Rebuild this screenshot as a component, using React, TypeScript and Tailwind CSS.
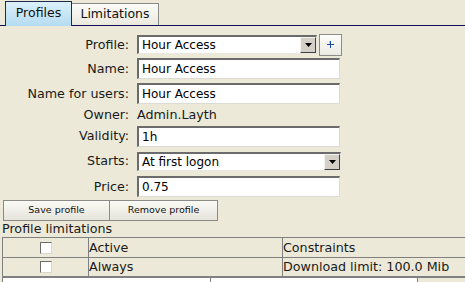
import React from "react";

const font = { fontFamily: '"DejaVu Sans", Verdana, sans-serif' };

function Arrow() {
  return (
    <div className="flex h-full w-[16px] items-center justify-center border-t border-l border-b border-r border-t-[#f4f3ee] border-l-[#f4f3ee] border-b-[#404040] border-r-[#404040] bg-[#d4d0c8]">
      <svg width="7" height="4" viewBox="0 0 7 4">
        <polygon points="0,0 7,0 3.5,4" fill="#000" />
      </svg>
    </div>
  );
}

function Select({ value, w }: { value: string; w: string }) {
  return (
    <div className={`flex h-[19px] ${w} items-stretch border-t-2 border-l-2 border-b border-r border-t-[#6b6b6b] border-l-[#6b6b6b] border-b-[#e8e7e0] border-r-[#e8e7e0] bg-white`}>
      <div className="flex-1 pl-[3px] text-[12px] leading-[16px] text-black">{value}</div>
      <Arrow />
    </div>
  );
}

function Input({ value }: { value: string }) {
  return (
    <div className="h-[21px] w-[203px] border-t-2 border-l-2 border-b border-r border-t-[#6b6b6b] border-l-[#6b6b6b] border-b-[#dcdbd4] border-r-[#dcdbd4] bg-white pl-[3px] text-[12px] leading-[18px] text-black">
      {value}
    </div>
  );
}

function Row({ label, h, children }: { label: string; h: string; children: React.ReactNode }) {
  return (
    <div className={`flex ${h} items-center`}>
      <div className="w-[130px] pr-[1px] text-right text-[12.7px] text-[#1a1a1a]">{label}</div>
      <div className="ml-[7px] flex items-center">{children}</div>
    </div>
  );
}

function Check() {
  return (
    <div className="mx-auto h-[12px] w-[12px] border-t border-l border-b border-r border-t-[#6b6b6b] border-l-[#6b6b6b] border-b-[#d8d7d0] border-r-[#d8d7d0] bg-white" />
  );
}

export default function App() {
  return (
    <div style={font} className="h-[282px] w-[465px] overflow-hidden bg-[#ECE9D8] text-black">
      {/* Tabs */}
      <div className="flex h-[26px] items-end border-b border-[#10105a] pl-[5px]">
        <div className="relative z-10 mb-[-1px] flex h-[25px] w-[67px] items-center justify-center border border-b-0 border-[#1c2c4c] bg-gradient-to-b from-[#dcf0fb] to-[#b5dcf1] pb-[1px] text-[12.5px] text-[#101010]">
          Profiles
        </div>
        <div className="flex h-[22px] w-[87px] items-center justify-center border border-b-0 border-l-0 border-[#8a8a86] bg-gradient-to-b from-[#fbfbf8] to-[#ebe9df] text-[12.5px] text-[#101010]">
          Limitations
        </div>
      </div>

      {/* Form */}
      <div className="pt-[7px]">
        <Row label="Profile:" h="h-[23px]">
          <Select value="Hour Access" w="w-[180px]" />
          <div className="ml-[2px] flex h-[22px] w-[23px] items-center justify-center border border-[#8c8c88] bg-gradient-to-b from-[#fdfdfb] to-[#ebeae2]">
            <svg width="7" height="7" viewBox="0 0 7 7">
              <rect x="3" y="0" width="1" height="7" fill="#1a4aa0" />
              <rect x="0" y="3" width="7" height="1" fill="#1a4aa0" />
              <rect x="2" y="0" width="1" height="3" fill="#e8a040" opacity="0.6" />
            </svg>
          </div>
        </Row>
        <Row label="Name:" h="h-[25px]">
          <Input value="Hour Access" />
        </Row>
        <Row label="Name for users:" h="h-[25px]">
          <Input value="Hour Access" />
        </Row>
        <Row label="Owner:" h="h-[18px]">
          <span className="text-[12.7px] text-[#1a1a1a]">Admin.Layth</span>
        </Row>
        <Row label="Validity:" h="h-[24px]">
          <Input value="1h" />
        </Row>
        <Row label="Starts:" h="h-[26px]">
          <Select value="At first logon" w="w-[204px]" />
        </Row>
        <Row label="Price:" h="h-[25px]">
          <Input value="0.75" />
        </Row>
      </div>

      {/* Buttons */}
      <div className="mt-[1px] flex pl-[3px]">
        <div className="flex h-[21px] w-[107px] items-center justify-center border border-[#8a8a86] bg-gradient-to-b from-[#fafaf6] to-[#e6e4da] text-[9.5px] text-[#111]">
          Save profile
        </div>
        <div className="flex h-[21px] w-[108px] items-center justify-center border border-l-0 border-[#8a8a86] bg-gradient-to-b from-[#fafaf6] to-[#e6e4da] text-[9.5px] text-[#111]">
          Remove profile
        </div>
      </div>

      <div className="h-[16px] pl-[2px] text-[12.7px] leading-[16px] text-[#1a1a1a]">Profile limitations</div>

      {/* Table */}
      <div className="ml-[2px] border-l border-t border-[#808080]">
        <div className="flex h-[20px] border-b border-[#808080]">
          <div className="flex w-[86px] items-center border-r border-[#808080]">
            <Check />
          </div>
          <div className="flex w-[194px] items-center border-r border-[#808080] text-[12.7px] text-[#1a1a1a]">Active</div>
          <div className="flex flex-1 items-center text-[12.7px] text-[#1a1a1a]">Constraints</div>
        </div>
        <div className="flex h-[20px] border-b-2 border-[#808080]">
          <div className="flex w-[86px] items-center border-r border-[#808080]">
            <Check />
          </div>
          <div className="flex w-[194px] items-center border-r border-[#808080] text-[12.7px] text-[#1a1a1a]">Always</div>
          <div className="flex flex-1 items-center text-[12.7px] text-[#1a1a1a]">Download limit: 100.0 Mib</div>
        </div>
        <div className="flex h-[10px]">
          <div className="w-[208px] border-r border-[#808080] bg-white" />
          <div className="w-[207px] border-r border-[#808080] bg-white" />
          <div className="flex-1" />
        </div>
      </div>
    </div>
  );
}
